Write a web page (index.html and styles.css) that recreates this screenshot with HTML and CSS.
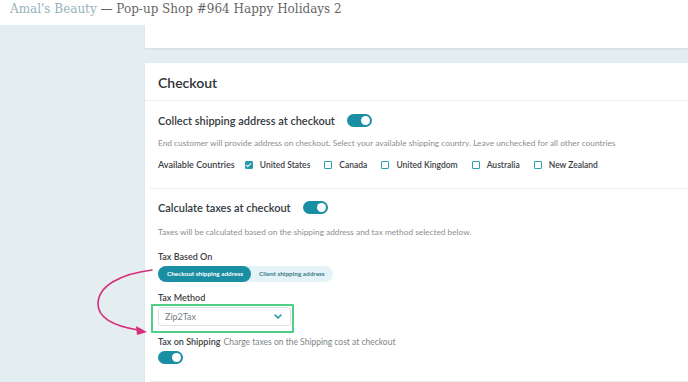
FILE: index.html
```html
<!DOCTYPE html>
<html lang="en">
<head>
  <meta charset="UTF-8">
  <title>Checkout settings</title>
  <link rel="stylesheet" href="styles.css">
</head>
<body>
  <header class="topbar">
    <span class="topbar__shop">Amal's Beauty</span> — Pop-up Shop #964 Happy Holidays 2
  </header>

  <div class="layout">
    <aside class="sidebar"></aside>

    <main class="content">
      <div class="card card--stub"></div>

      <section class="card checkout">
        <h2 class="checkout__title">Checkout</h2>

        <!-- shipping address -->
        <div class="block">
          <div class="block__head">
            <h3 class="block__title">Collect shipping address at checkout</h3>
            <span class="toggle"></span>
          </div>
          <p class="block__desc">End customer will provide address on checkout. Select your available shipping country. Leave unchecked for all other countries</p>
          <div class="countries">
            <span class="label">Available Countries</span>
            <label class="check check--on"><span class="check__box"></span>United States</label>
            <label class="check"><span class="check__box"></span>Canada</label>
            <label class="check"><span class="check__box"></span>United Kingdom</label>
            <label class="check"><span class="check__box"></span>Australia</label>
            <label class="check"><span class="check__box"></span>New Zealand</label>
          </div>
        </div>

        <!-- taxes -->
        <div class="block block--taxes">
          <div class="block__head">
            <h3 class="block__title">Calculate taxes at checkout</h3>
            <span class="toggle"></span>
          </div>
          <p class="block__desc">Taxes will be calculated based on the shipping address and tax method selected below.</p>

          <div class="field field--first">
            <span class="label">Tax Based On</span>
            <div class="pills">
              <span class="pill pill--active">Checkout shipping address</span>
              <span class="pill">Client shipping address</span>
            </div>
          </div>

          <div class="field">
            <span class="label">Tax Method</span>
            <div class="select-wrap">
              <div class="select">
                <span>Zip2Tax</span>
                <svg class="select__chevron" width="8" height="5" viewBox="0 0 8 5"><path d="M1 1l3 3 3-3" fill="none" stroke="#1f97ad" stroke-width="1.6" stroke-linecap="round" stroke-linejoin="round"/></svg>
              </div>
              <span class="highlight"></span>
            </div>
          </div>

          <div class="field field--ship">
            <p class="ship"><span class="label">Tax on Shipping</span> Charge taxes on the Shipping cost at checkout</p>
            <span class="toggle"></span>
          </div>
        </div>
      </section>
    </main>
  </div>

  <!-- annotation arrow -->
  <svg class="arrow" width="80" height="80" viewBox="0 0 80 80">
    <path d="M60 6 C28 10, 6 22, 6 40 C6 54, 22 62, 46 66" fill="none" stroke="#d6307d" stroke-width="1.6" stroke-linecap="round"/>
    <path d="M55 68 L44 62 L45 71 Z" fill="#d6307d"/>
  </svg>
</body>
</html>
```

FILE: styles.css
```css
/* ====== base ====== */
html, body {
  margin: 0;
  height: 100%;
  overflow: hidden;
}

body {
  background: #e4edf0;
  font-family: Lato, "Open Sans", sans-serif;
  color: #333;
  position: relative;
}

p, h2, h3 { margin: 0; }

/* ====== top bar ====== */
.topbar {
  height: 25px;
  background: #fff;
  padding-left: 10px;
  font-family: "DejaVu Serif", serif;
  font-size: 12px;
  line-height: 18px;
  color: #666;
  white-space: nowrap;
}

.topbar__shop { color: #93b3bb; }

/* ====== layout ====== */
.layout {
  display: flex;
}

.sidebar {
  width: 145px;
  flex: none;
}

.content {
  flex: 1;
  display: flex;
  flex-direction: column;
  gap: 15px;
}

.card {
  background: #fff;
  box-shadow: 0 1px 2px rgba(0, 0, 0, 0.08);
}

.card--stub { height: 23px; }

/* ====== checkout card ====== */
.checkout__title {
  height: 37px;
  padding-left: 13px;
  font-size: 14px;
  font-weight: 600;
  line-height: 40px;
  color: #2f3336;
  border-bottom: 1px solid #edf1f3;
}

.block {
  margin-left: 5px;
  padding: 11px 0 0 8px;
  height: 76px;
  border-bottom: 1px solid #e8eced;
}

.block--taxes {
  height: 182px;
  padding-top: 10px;
}

.block__head {
  display: flex;
  align-items: center;
  gap: 12px;
  height: 16px;
}

.block__title {
  font-size: 11px;
  font-weight: 600;
  color: #333a3e;
}

.block__desc {
  margin-top: 9px;
  font-size: 8.3px;
  color: #8a8f92;
  line-height: 12px;
}

.block--taxes .block__desc { margin-top: 11px; }

.label {
  font-size: 9px;
  font-weight: 600;
  color: #3b4145;
}

/* ====== toggle ====== */
.toggle {
  position: relative;
  width: 25px;
  height: 13px;
  border-radius: 7px;
  background: #1a8ea3;
  flex: none;
}

.toggle::after {
  content: '';
  position: absolute;
  top: 2px;
  right: 2px;
  width: 9px;
  height: 9px;
  border-radius: 50%;
  background: #fff;
}

/* ====== countries ====== */
.countries {
  display: flex;
  align-items: center;
  margin-top: 9px;
  height: 13px;
}

.countries .label { margin-right: 10px; }

.check {
  display: flex;
  align-items: center;
  gap: 7px;
  margin-right: 14px;
  font-size: 8.5px;
  font-weight: 600;
  color: #3b4145;
}

.check__box {
  width: 6px;
  height: 6px;
  border: 1.5px solid #2aa2b3;
  border-radius: 1px;
  position: relative;
}

.check--on .check__box { background: #2596a9; }

.check--on .check__box::after {
  content: '';
  position: absolute;
  left: 1.5px;
  top: 0;
  width: 2px;
  height: 4px;
  border: solid #fff;
  border-width: 0 1.3px 1.3px 0;
  transform: rotate(45deg);
}

/* ====== fields ====== */
.field {
  display: flex;
  flex-direction: column;
  align-items: flex-start;
  gap: 4px;
  margin-top: 10px;
}

.field--first { margin-top: 13px; }

.pills {
  display: flex;
  height: 16px;
  border-radius: 8px;
  background: #e3f3f7;
}

.pill {
  padding: 0 8px;
  font-size: 6.4px;
  font-weight: 700;
  line-height: 16px;
  color: #3e7a87;
  border-radius: 8px;
}

.pill--active {
  background: #1a8ea3;
  color: #fff;
  padding: 0 8px 0 9px;
}

.select-wrap {
  position: relative;
}

.select {
  display: flex;
  align-items: center;
  justify-content: space-between;
  box-sizing: border-box;
  width: 133px;
  height: 19px;
  padding: 0 8px 0 6px;
  border: 1px solid #dde2e4;
  border-radius: 3px;
  font-size: 9px;
  color: #7b8084;
}

.highlight {
  position: absolute;
  left: -7px;
  top: -3px;
  right: -3px;
  bottom: -7px;
  border: 2px solid #4fcf86;
  border-radius: 1px;
}

.field--ship {
  margin-top: 10px;
  gap: 4px;
}

.ship {
  font-size: 8.5px;
  color: #80868a;
}

.ship .label { margin-right: 1px; }

/* ====== annotation ====== */
.arrow {
  position: absolute;
  left: 92px;
  top: 264px;
}
```
